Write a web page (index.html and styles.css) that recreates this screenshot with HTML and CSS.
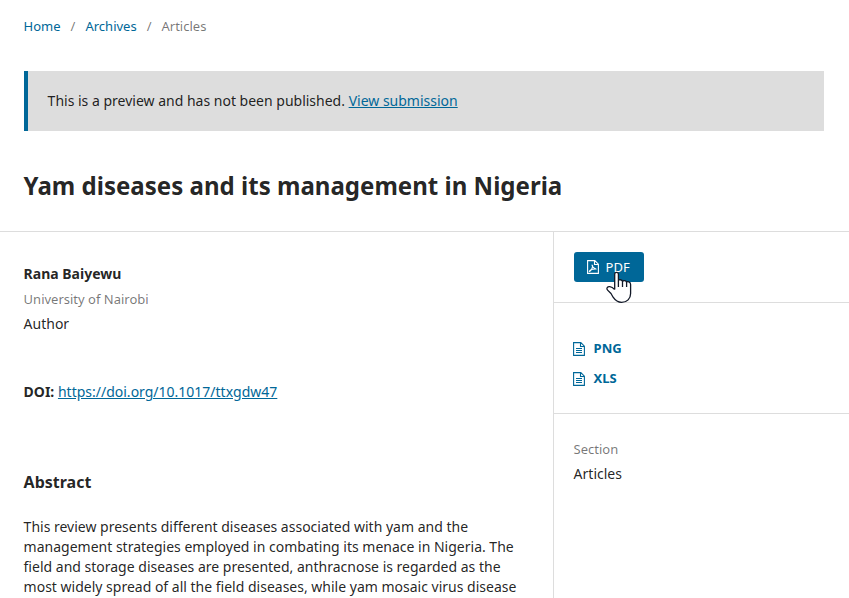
FILE: index.html
```html
<!DOCTYPE html>
<html lang="en">
<head>
<meta charset="utf-8">
<title>Yam diseases and its management in Nigeria</title>
<link rel="stylesheet" href="styles.css">
</head>
<body>
<nav class="breadcrumbs">
<a href="#">Home</a><span class="sep">/</span><a href="#">Archives</a><span class="sep">/</span><span>Articles</span>
</nav>
<div class="notice">This is a preview and has not been published. <a href="#">View submission</a></div>
<h1>Yam diseases and its management in Nigeria</h1>
<div class="row">
<main>
<section class="author"><strong>Rana Baiyewu</strong><span class="affiliation">University of Nairobi</span><span>Author</span></section>
<section class="doi"><strong>DOI:</strong> <a href="#">https://doi.org/10.1017/ttxgdw47</a></section>
<section class="abstract"><h2>Abstract</h2>
<p>This review presents different diseases associated with yam and the<br>management strategies employed in combating its menace in Nigeria. The<br>field and storage diseases are presented, anthracnose is regarded as the<br>most widely spread of all the field diseases, while yam mosaic virus disease</p></section>
</main>
<aside>
<div class="item primary"><a class="pdf" href="#"><svg class="icon" viewBox="0 0 12 14"><path d="M.6.6h7.200L11.400 4.200v9.200H.6zM7.500.8v3.700h3.700"/><path d="M5.300 4.600c-.7.900.6 3.600 4.200 4.600M5.600 5.200c.2 2.600-1.700 5.900-3.200 6.200.2-1.500 3.600-2.500 6.800-2.400"/></svg>PDF</a>
<svg class="cursor" viewBox="0 0 28 33"><path d="M9.700 18.500V3.200c0-2.500 3.700-2.500 3.700 0v6.500c.5-1.500 3.700-1.300 4.100.8.600-1.300 3.500-1.200 4.100.7.800-1.100 4-.5 4 2.200V22.500c0 5.200-3.600 8.900-9 8.900-4.600 0-6.300-1.900-8.500-5.200L6 22.500l-3.400-3.400c-1.700-1.700-.1-3.800 2.200-3.500 1.800.3 3.400 1.400 4.900 2.900M13.400 9.700v6.300M17.500 10.500v5.500M21.600 11.200v4.800"/></svg></div>
<div class="item files"><a href="#"><svg class="icon" viewBox="0 0 12 14"><path d="M.6.6h7.200L11.400 4.200v9.200H.6zM7.500.8v3.700h3.700M3 6.500h6M3 8.500h6M3 10.500h6"/></svg>PNG</a><a href="#"><svg class="icon" viewBox="0 0 12 14"><path d="M.6.6h7.200L11.400 4.200v9.200H.6zM7.500.8v3.700h3.700M3 6.500h6M3 8.500h6M3 10.500h6"/></svg>XLS</a></div>
<div class="section"><span>Section</span><strong>Articles</strong></div>
</aside>
</div>
</body>
</html>
```
FILE: styles.css
```css
*{box-sizing:border-box}
body{margin:0;height:598px;overflow:hidden;background:#fff;color:rgba(0,0,0,.87);font:14px/20px "Noto Sans",sans-serif}
a{color:#006798}
.breadcrumbs{height:71px;padding:14px 23.6px;font-size:13px;line-height:25px;color:rgba(0,0,0,.54)}
.breadcrumbs a{text-decoration:none}
.sep{padding:0 10px}
.notice{height:60px;margin:0 25px 0 24px;padding:20px 19.6px;border-left:4px solid #006798;background:#ddd}
h1{height:100px;margin:0;padding:40px 23.6px 0;font-size:24.06px;line-height:30px}
.row{display:flex;height:367px;border-top:1px solid #ddd}
main{width:553px;padding:32px 23.6px 0;white-space:nowrap}
.author{display:flex;flex-direction:column;height:118px;line-height:20px}
.author span{line-height:25px}
.author .affiliation{margin:5px 0 2px;line-height:20px;font-size:13px;color:rgba(0,0,0,.54)}
.doi{height:90px}
h2{margin:0;font-size:16px;line-height:20px}
p{margin:25px 0 0}
aside{width:296px;border-left:1px solid #ddd}
.item{border-bottom:1px solid #ddd}
.primary{position:relative;height:71px;padding:20px}
.pdf{display:inline-flex;align-items:center;width:70px;height:30px;padding-left:13px;border-radius:3px;background:#006798;color:#fff;font-size:13px;text-decoration:none}
.icon{width:12px;height:14px;margin-right:6.6px;fill:none;stroke:currentColor;stroke-width:1.1}
.cursor{position:absolute;left:51px;top:39px;width:28px;height:33px;fill:#fff;stroke:#111827;stroke-width:1.3;stroke-linejoin:round}
.files{height:111px;padding:30px 19px}
.files a{display:flex;align-items:center;height:30px;font-size:13px;font-weight:700;text-decoration:none}
.files .icon{position:relative;top:1px;margin-right:8.6px}
.section{display:flex;flex-direction:column;padding:23px 19.6px}
.section span{font-size:13px;line-height:25px;color:rgba(0,0,0,.54)}
.section strong{font-weight:400;line-height:24px}
```
